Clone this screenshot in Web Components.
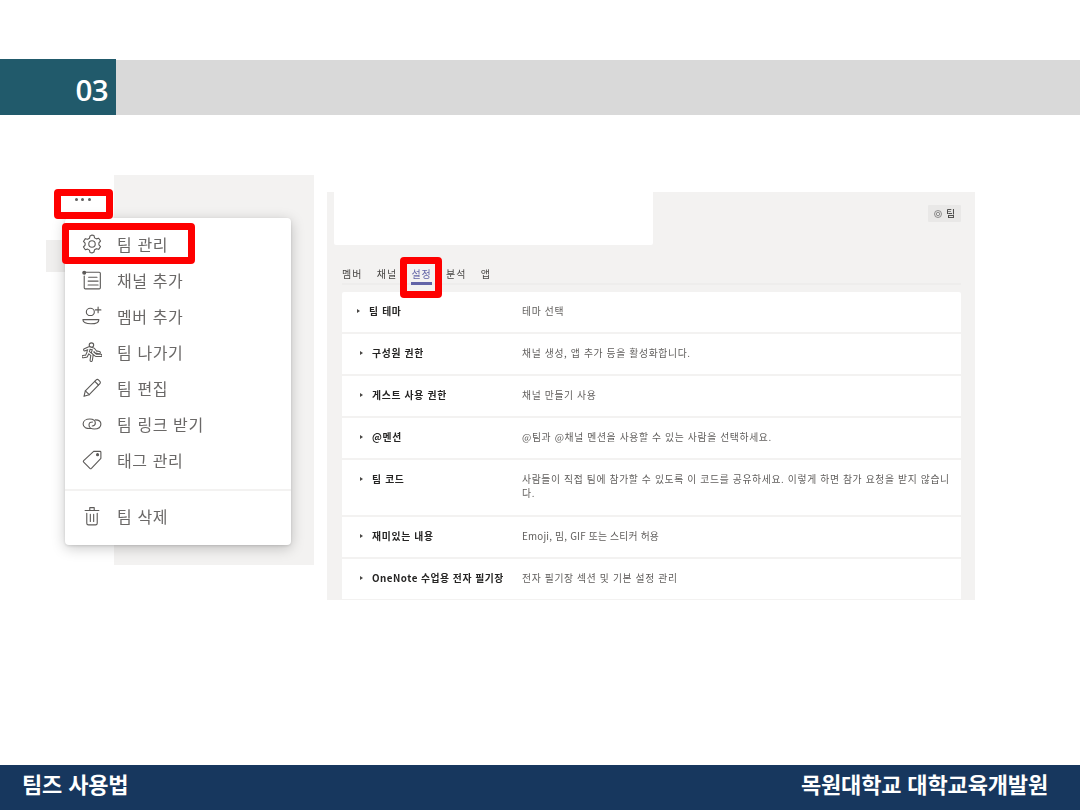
<!DOCTYPE html>
<html lang="ko"><head><meta charset="utf-8"><title>팀즈 사용법</title>
<style>
html,body{margin:0;padding:0;background:#fff}
body{width:1080px;height:810px;overflow:hidden;font-family:"Noto Sans CJK KR","Noto Sans",sans-serif}
</style></head><body>
<slide-page>
  <slide-header slot="header" num="03"></slide-header>
  <team-menu-shot slot="canvas"></team-menu-shot>
  <team-settings-shot slot="canvas"></team-settings-shot>
  <slide-footer slot="footer" left="팀즈 사용법" right="목원대학교 대학교육개발원"></slide-footer>
</slide-page>
<script>
const def=(name,css,html,setup)=>customElements.define(name,class extends HTMLElement{
  connectedCallback(){ if(this.shadowRoot)return; const r=this.attachShadow({mode:'open'});
    r.innerHTML=`<style>${css}</style>`+(typeof html==='function'?html(this):html); if(setup)setup(r,this);}
});
def('slide-page',`
 :host{display:flex;flex-direction:column;width:1080px;height:810px}
 .top{padding-top:59px}
 .canvas{position:relative;flex:1}
`,`<div class="top"><slot name="header"></slot></div><div class="canvas"><slot name="canvas"></slot></div><slot name="footer"></slot>`);
def('slide-header',`
 :host{display:flex;height:56px;align-items:stretch}
 .num{width:116px;box-sizing:border-box;background:#215a6b;color:#fff;display:flex;align-items:center;justify-content:flex-end;padding:6px 8px 0 0;
   font:600 29.500px/1 "Open Sans",sans-serif;letter-spacing:-.6px}
 .bar{flex:1;background:#d9d9d9;margin-top:1px}
`,h=>`<div class="num">${h.getAttribute('num')}</div><div class="bar"></div>`);
def('slide-footer',`
 :host{display:flex;height:45px;background:#17375e;color:#fff;align-items:center;justify-content:space-between;padding:0 32px 0 22px;
   font:700 22px/1 "Noto Sans CJK KR",sans-serif;letter-spacing:-.15px}
 span{position:relative;top:-5px}
 span:first-child{letter-spacing:-.75px}
`,h=>`<span>${h.getAttribute('left')}</span><span>${h.getAttribute('right')}</span>`);
def('red-box',`
 :host{position:absolute;box-sizing:border-box;border:7px solid #fe0000;border-radius:4px;display:block}
`,`<slot></slot>`);
const fig=`M2.500 7l4-1.700 3.800 1 2.200 2.700 3 .5M6.500 5.500L5.500 9l3.500 2.700-.7 4.800M5.500 9.500L4 12.700l-3 .5M10.500 6.500l-1 3 3 2.500h4.500`;
const I={
 gear:`<path d="M9 1l1.800.4.5 2.100 1.600.9 2.100-.6 1.700 2.500-1.500 1.600v1.800l1.500 1.600-1.700 2.500-2.100-.6-1.600.9-.5 2.100L9 17l-1.800-.4-.5-2.100-1.600-.9-2.100.6L1.300 11.700l1.500-1.600V8.300L1.300 6.700 3 4.200l2.100.6 1.600-.9.5-2.100z"/><circle cx="9" cy="9" r="2.900"/>`,
 channel:`<path d="M3.500 2h12a1 1 0 0 1 1 1v13a1 1 0 0 1-1 1H3a1 1 0 0 1-1-1V5.500"/><path d="M6 6.500h7.500M5.500 10h9M5.500 13.500h9"/><circle cx="2" cy="2.500" r="1.300" fill="currentColor"/>`,
 member:`<ellipse cx="7.500" cy="5.300" rx="3.600" ry="3.300"/><path d="M.8 12.300h14.400c0 2.300-3 3.700-7.200 3.700S.8 14.600.8 12.300z"/><path d="M14.500 1v5M12 3.500h5"/>`,
 leave:`<circle cx="8.500" cy="2.800" r="2"/><path d="${fig}" stroke-width="3"/><path d="${fig}" stroke="#fff" stroke-width="1.100"/>`,
 edit:`<path d="M1.800 16.500l1.200-5L12.800 1.700a1.400 1.400 0 0 1 2 0l1.300 1.300a1.400 1.400 0 0 1 0 2L6.500 15z"/><path d="M11.500 3l3.300 3.300M3 11.500L6.500 15"/>`,
 link:`<path d="M8.500 13C4 13.500 1 12 1 9c0-2.800 2.700-4.500 6-4.500 3 0 5 1.500 5 3.700 0 1.600-1.200 2.600-2.800 2.600"/><path d="M9.500 7.200c-1.700 0-3.200 1-3.200 2.600 0 2.200 2.200 3.700 4.700 3.700 3.500 0 6-1.700 6-4.500 0-2.200-2-3.700-5-3.700"/>`,
 tag:`<path d="M10.500 1.200h5.700a.8.8 0 0 1 .8.8v5.500L8.500 16.500a1 1 0 0 1-1.400 0L1.500 11a1 1 0 0 1 0-1.400z"/><circle cx="14" cy="4.200" r=".9" fill="currentColor"/>`,
 trash:`<path d="M2.800 4h12.400M7 4V1.500h4V4M4.300 6.500V15.500a1.500 1.500 0 0 0 1.500 1.500h6.400a1.500 1.500 0 0 0 1.500-1.500V6.500"/><path d="M7.500 7.500v6.500M10.500 7.500v6.500"/>`
};
def('menu-item',`
 :host{display:flex;align-items:center;height:36px;padding-left:16.500px;color:#6a6867;font:400 16px/1 "Noto Sans CJK KR",sans-serif;letter-spacing:.6px}
 svg{width:20px;height:20px;fill:none;stroke:#5c5a58;stroke-width:1;stroke-linejoin:round;stroke-linecap:round;color:#5c5a58;flex:none;margin-right:15.500px}
`,h=>`<svg viewBox="0 0 18 18" aria-hidden="true">${I[h.getAttribute('icon')]}</svg><slot></slot>`);
def('team-menu-shot',`
 :host{position:absolute;left:40px;top:60px;width:280px;height:395px;display:block}
 .bg{position:absolute;left:74px;top:0;width:200px;height:390px;background:#f3f2f1}
 .tab{position:absolute;left:6px;top:65px;width:30px;height:32px;background:#f0efee}
 .dots{position:absolute;left:35px;top:20px;display:flex;gap:3.300px;padding-top:2.500px;z-index:3}
 .dots i{width:3px;height:3px;border-radius:50%;background:#5f5e5d}
 .menu{position:absolute;left:25px;top:43px;width:226px;height:327px;box-sizing:border-box;background:#fff;border-radius:4px;box-shadow:0 3px 14px rgba(0,0,0,.22),0 1px 3px rgba(0,0,0,.12);padding-top:7.500px;display:flex;flex-direction:column;filter:blur(.3px)}
 .sep{height:2px;background:#f3f2f1;margin:11.500px 0 7px}
 red-box.a{left:14px;top:14px;width:59px;height:30px;z-index:2}
 red-box.b{left:22px;top:48px;width:133px;height:41px;z-index:2}
`,`<div class="bg"></div><div class="tab"></div>
<div class="dots"><i></i><i></i><i></i></div>
<div class="menu">
 <menu-item icon="gear">팀 관리</menu-item><menu-item icon="channel">채널 추가</menu-item><menu-item icon="member">멤버 추가</menu-item>
 <menu-item icon="leave">팀 나가기</menu-item><menu-item icon="edit">팀 편집</menu-item><menu-item icon="link">팀 링크 받기</menu-item>
 <menu-item icon="tag">태그 관리</menu-item><div class="sep"></div><menu-item icon="trash">팀 삭제</menu-item>
</div><red-box class="a"></red-box><red-box class="b"></red-box>`);
def('settings-row',`
 :host{display:grid;grid-template-columns:180px 1fr;box-sizing:border-box;height:42px;padding:12px 9px 0 0;border-bottom:2px solid #f3f2f1;font:400 9.800px/14px "Noto Sans CJK KR",sans-serif;letter-spacing:.65px}
 :host([tall]){height:57px}
 .t{display:flex;align-items:flex-start;padding-left:18px;font-weight:700;color:#252423;white-space:nowrap;letter-spacing:.7px}
 :host([first]) .t{padding-left:15px}
 :host([latin-t]) .t{letter-spacing:.5px}
 :host([latin-d]) .d{letter-spacing:.2px}
 .t::before{content:"";flex:none;width:0;height:0;margin:5px 9px 0 0;border-left:3px solid #484644;border-top:2.500px solid transparent;border-bottom:2.500px solid transparent}
 .d{color:#605e5c}
`,h=>`<div class="t">${h.getAttribute('label')}</div><div class="d"><slot></slot></div>`);
def('team-settings-shot',`
 :host{position:absolute;left:327px;top:77px;width:648px;height:408px;display:block;background:#f3f2f1;overflow:hidden}
 .wrap{display:flex;flex-direction:column;height:100%;padding:0 14px 0 15px;box-sizing:border-box;filter:blur(.25px)}
 .head{display:flex;justify-content:space-between;height:53px;margin-left:-8px;flex:none}
 .hero{width:319px;background:#fff;border-radius:0 0 2px 2px}
 .btn{align-self:flex-start;margin-top:13px;width:33px;height:17px;background:#e9e8e7;border-radius:1px;display:flex;align-items:center;justify-content:center;gap:4px;font:400 9.500px/1 "Noto Sans CJK KR",sans-serif;color:#252423}
 .btn svg{width:8px;height:8px;fill:none;stroke:#777;stroke-width:.8}
 .tabs{display:flex;gap:14.300px;height:40px;padding-top:22px;box-sizing:border-box;border-bottom:2px solid #eeedec;font:400 10px/14px "Noto Sans CJK KR",sans-serif;letter-spacing:1px;color:#484644;flex:none;margin-bottom:7px}
 .tabs .on{color:#6264a7;position:relative}
 .tabs .on::after{content:"";position:absolute;left:0;right:0;top:15px;height:3px;background:#6264a7}
 .list{flex:1;background:#fff;border-radius:2px 2px 0 0;overflow:hidden}
 red-box{left:73px;top:65px;width:42px;height:41px;z-index:2;background:transparent}
`,`<div class="wrap">
 <div class="head"><div class="hero"></div><div class="btn"><svg viewBox="0 0 8 8"><circle cx="4" cy="4" r="3.500"/><circle cx="4" cy="4" r="1.700"/></svg>팀</div></div>
 <div class="tabs"><span>멤버</span><span>채널</span><span class="on">설정</span><span>분석</span><span>앱</span></div>
 <div class="list">
  <settings-row first label="팀 테마">테마 선택</settings-row>
  <settings-row label="구성원 권한">채널 생성, 앱 추가 등을 활성화합니다.</settings-row>
  <settings-row label="게스트 사용 권한">채널 만들기 사용</settings-row>
  <settings-row label="@멘션">@팀과 @채널 멘션을 사용할 수 있는 사람을 선택하세요.</settings-row>
  <settings-row tall label="팀 코드">사람들이 직접 팀에 참가할 수 있도록 이 코드를 공유하세요. 이렇게 하면 참가 요청을 받지 않습니다.</settings-row>
  <settings-row latin-d label="재미있는 내용">Emoji, 밈, GIF 또는 스티커 허용</settings-row>
  <settings-row latin-t label="OneNote 수업용 전자 필기장">전자 필기장 섹션 및 기본 설정 관리</settings-row>
 </div></div><red-box></red-box>`);
</script>
</body></html>
